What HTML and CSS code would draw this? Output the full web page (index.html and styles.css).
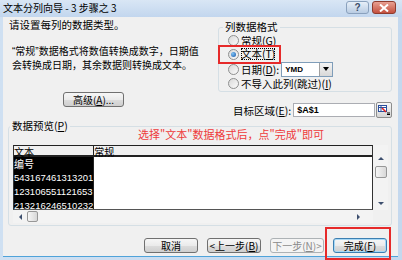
FILE: index.html
```html
<!DOCTYPE html>
<html lang="zh-CN">
<head>
    <meta charset="UTF-8">
    <title>文本分列向导 - 3 步骤之 3</title>
    <link rel="stylesheet" href="styles.css">
</head>
<body>
<div class="window">
    <div class="titlebar">
        <span class="title">文本分列向导 - 3 步骤之 3</span>
        <div class="caption-btns">
            <span class="cap help">?</span>
            <span class="cap close">
                <svg width="10" height="8" viewBox="0 0 10 8"><path d="M1 0.5 L9 7.5 M9 0.5 L1 7.5" stroke="#fff" stroke-width="2"/></svg>
            </span>
        </div>
    </div>
    <div class="frame">
        <div class="client">
            <div class="top">
                <div class="intro">
                    <p class="lead">请设置每列的数据类型。</p>
                    <p class="desc">“常规”数据格式将数值转换成数字，日期值<br>会转换成日期，其余数据则转换成文本。</p>
                    <button class="btn adv">高级(<u>A</u>)...</button>
                </div>
                <div class="side">
                    <fieldset class="group fmt">
                        <legend>列数据格式</legend>
                        <div class="opt r1"><span class="radio"></span>常规(<u>G</u>)</div>
                        <div class="opt r2"><span class="radio on"></span><span class="focus">文本(<u>T</u>)</span><span class="mark"></span></div>
                        <div class="opt r3"><span class="radio"></span>日期(<u>D</u>):
                            <span class="combo"><span class="combo-text">YMD</span><span class="drop"></span></span>
                        </div>
                        <div class="opt r4"><span class="radio"></span>不导入此列(跳过)(<u>I</u>)</div>
                    </fieldset>
                    <div class="dest">
                        <span>目标区域(<u>E</u>):</span>
                        <span class="field">$A$1</span>
                        <span class="refbtn">
                            <svg width="12" height="10" viewBox="0 0 12 10">
                                <rect x="0.5" y="0.5" width="8" height="6" fill="#fff" stroke="#2a4f9e"/>
                                <path d="M1 2.5 H8 M3 1 V6" stroke="#2a4f9e" stroke-width="1"/>
                                <path d="M4 3 L8 7" stroke="#e02020" stroke-width="1.6"/>
                                <path d="M9 8 H12 M9 9.5 H12" stroke="#000" stroke-width="1"/>
                            </svg>
                        </span>
                    </div>
                </div>
            </div>

            <fieldset class="group preview">
                <legend>数据预览(<u>P</u>)</legend>
                <div class="note">选择"文本"数据格式后，点"完成"即可</div>
                <div class="grid-wrap">
                    <div class="grid">
                        <div class="col sel">
                            <div class="head">文本</div>
                            <div class="cell">编号</div>
                            <div class="cell num">543167461313201</div>
                            <div class="cell num">123106551121653</div>
                            <div class="cell num">213216246510232</div>
                        </div>
                        <div class="col">
                            <div class="head">常规</div>
                        </div>
                    </div>
                    <div class="vscroll">
                        <span class="arrow up"></span>
                        <span class="thumb"></span>
                        <span class="arrow down"></span>
                    </div>
                </div>
                <div class="hscroll">
                    <span class="arrow left"></span>
                    <span class="thumb"></span>
                    <span class="arrow right"></span>
                </div>
            </fieldset>

            <div class="actions">
                <button class="btn">取消</button>
                <button class="btn">&lt;上一步(<u>B</u>)</button>
                <button class="btn" disabled>下一步(<u>N</u>)&gt;</button>
                <button class="btn default">完成(<u>F</u>)<span class="mark"></span></button>
            </div>
        </div>
    </div>
</div>
</body>
</html>
```

FILE: styles.css
```css
/* Window frame */
* {
  box-sizing: border-box;
}

body {
  margin: 0;
  width: 402px;
  height: 260px;
  overflow: hidden;
  font-family: "Noto Sans CJK SC", "Liberation Sans", sans-serif;
  font-size: 10.5px;
  color: #000;
  background: #c7dbf0;
}

.window {
  width: 402px;
  height: 260px;
  display: flex;
  flex-direction: column;
}

.titlebar {
  height: 17px;
  display: flex;
  align-items: flex-start;
  justify-content: space-between;
  padding: 0 6px 0 3px;
  background: linear-gradient(to bottom, #d9e6f5, #c2d6ee);
}

.title {
  line-height: 15px;
  font-size: 10px;
}

.caption-btns {
  display: flex;
  gap: 3px;
  padding-top: 1px;
}

.cap {
  height: 13px;
  border-radius: 3px;
  display: flex;
  align-items: center;
  justify-content: center;
}

.help {
  width: 23px;
  border: 1px solid #8aa1bd;
  background: linear-gradient(to bottom, #e7eff8, #b9cce3);
  color: #3b4e6a;
  font-family: "Liberation Sans", sans-serif;
  font-size: 10px;
  font-weight: 700;
  line-height: 11px;
}

.close {
  width: 24px;
  border: 1px solid #8e3b2e;
  background: linear-gradient(to bottom, #e8a092, #c4503f);
}

.frame {
  flex: 1;
  padding: 0 4px 0 3px;
  background: linear-gradient(to right, #cfe0f2, #c4d8ee);
}

.client {
  height: 240px;
  background: #f0f0f0;
  border-bottom: 1px solid #4fa3da;
  display: flex;
  flex-direction: column;
}

/* Top area */
.top {
  display: flex;
  height: 102px;
}

.intro {
  width: 215px;
  display: flex;
  flex-direction: column;
  align-items: flex-start;
}

.intro p {
  margin: 0;
  line-height: 14px;
  white-space: nowrap;
}

.lead {
  margin-top: 1px !important;
  padding-left: 6px;
}

.desc {
  margin-top: 13px !important;
  padding-left: 9px;
  font-family: "Liberation Sans", "Noto Sans CJK SC", sans-serif;
  font-size: 10px;
}

.btn {
  font-family: inherit;
  font-size: 10px;
  color: #000;
  height: 15px;
  padding: 0;
  line-height: 13px;
  white-space: nowrap;
  border: 1px solid #707070;
  border-radius: 3px;
  background: linear-gradient(to bottom, #f6f6f6 0%, #ebebeb 50%, #dddddd 51%, #cfcfcf 100%);
  position: relative;
}

.adv {
  width: 61px;
  margin: 19px 0 0 60px;
}

.side {
  width: 174px;
  display: flex;
  flex-direction: column;
}

.group {
  margin: 0;
  padding: 0 0 0 4px;
  border: 1px solid #d5dfe5;
  border-radius: 3px;
}

.group legend {
  padding: 0 2px;
  line-height: 12px;
}

.fmt {
  margin-top: 4px;
  height: 71px;
}

.opt {
  display: flex;
  align-items: center;
  position: relative;
  white-space: nowrap;
}

.r1 { height: 13px; margin-top: 1px; }
.r2 { height: 14px; }
.r3 { height: 16px; }
.r4 { height: 13px; }

.radio {
  width: 11px;
  height: 11px;
  margin: 0 2px 0 5px;
  border: 1px solid #8e8f8f;
  border-radius: 50%;
  background: linear-gradient(135deg, #d9d9d9, #fbfbfb);
  display: flex;
  align-items: center;
  justify-content: center;
}

.radio.on::after {
  content: "";
  width: 5px;
  height: 5px;
  border-radius: 50%;
  background: radial-gradient(circle at 35% 35%, #7fc3f5, #1656a8);
}

.focus {
  outline: 1px dotted #000;
  outline-offset: -1px;
  line-height: 12px;
}

.mark {
  position: absolute;
  border: 2px solid #e62a2a;
  pointer-events: none;
}

.r2 .mark {
  left: -5px;
  top: -2px;
  width: 63px;
  height: 19px;
}

.combo {
  width: 52px;
  height: 15px;
  margin-left: 2px;
  border: 1px solid #7f9db9;
  background: #fff;
  display: flex;
  justify-content: space-between;
}

.combo-text {
  font-family: "Liberation Sans", sans-serif;
  font-size: 8px;
  font-weight: 700;
  line-height: 13px;
  padding-left: 3px;
}

.drop {
  width: 13px;
  border-left: 1px solid #a0a0a0;
  background: linear-gradient(to bottom, #f4f4f4, #d8d8d8);
  display: flex;
  align-items: center;
  justify-content: center;
}

.drop::after {
  content: "";
  border-left: 3px solid transparent;
  border-right: 3px solid transparent;
  border-top: 4px solid #000;
}

.dest {
  display: flex;
  align-items: center;
  height: 16px;
  margin-top: 10px;
  padding-left: 15px;
  white-space: nowrap;
}

.field {
  width: 83px;
  height: 14px;
  margin-left: 2px;
  border: 1px solid #abadb3;
  background: #fff;
  font-family: "Liberation Sans", sans-serif;
  font-size: 9px;
  font-weight: 700;
  line-height: 12px;
  padding-left: 3px;
}

.refbtn {
  width: 16px;
  height: 16px;
  margin-left: 1px;
  border: 1px solid #8d8d8d;
  border-radius: 2px;
  background: linear-gradient(to bottom, #f6f6f6, #d6d6d6);
  display: flex;
  align-items: center;
  justify-content: center;
}

/* Preview */
.preview {
  margin: 1px 6px 0 5px;
  padding: 0;
  height: 106px;
}

.preview legend {
  margin-left: 1px;
}

.note {
  margin: -4px 0 0 129px;
  line-height: 13px;
  color: #ee3b3b;
  font-size: 11px;
}

.grid-wrap {
  display: flex;
  margin: 4px 0 0 4px;
  height: 65px;
}

.grid {
  width: 360px;
  display: flex;
  border: 1px solid #333;
  border-top-color: #222;
  border-bottom-color: #555;
  background: #fff;
  overflow: hidden;
}

.col {
  flex: 1;
}

.col.sel {
  flex: 0 0 70px;
  border-right: 1px solid #222;
  background: #000;
  color: #fff;
}

.head {
  height: 11px;
  line-height: 11px;
  font-size: 10px;
  background: #f0f0f0;
  color: #000;
  border-bottom: 2px solid #222;
  white-space: nowrap;
}

.cell {
  height: 14px;
  line-height: 14px;
  font-size: 10px;
  white-space: nowrap;
  overflow: hidden;
}

.cell.num {
  font-family: "Liberation Sans", sans-serif;
  font-size: 9.5px;
}

.vscroll {
  width: 15px;
  display: flex;
  flex-direction: column;
  align-items: center;
  padding-top: 6px;
  background: #f3f3f3;
}

.hscroll {
  width: 360px;
  height: 13px;
  margin-left: 4px;
  display: flex;
  align-items: center;
  background: #f3f3f3;
}

.arrow {
  width: 14px;
  height: 14px;
  display: flex;
  align-items: center;
  justify-content: center;
}

.arrow::after {
  content: "";
  border: 3px solid transparent;
}

.arrow.up::after { border-bottom: 3px solid #3d4f6e; border-top-width: 0; }
.arrow.down::after { border-top: 3px solid #3d4f6e; border-bottom-width: 0; }
.arrow.left::after { border-right: 3px solid #3d4f6e; border-left-width: 0; }
.arrow.right::after { border-left: 3px solid #3d4f6e; border-right-width: 0; }

.vscroll .thumb {
  width: 12px;
  height: 12px;
  margin-top: 1px;
  margin-bottom: auto;
}

.hscroll .thumb {
  width: 11px;
  height: 11px;
  margin-right: auto;
}

.thumb {
  border: 1px solid #979797;
  border-radius: 2px;
  background: linear-gradient(to right, #f6f6f6, #d8d8d8);
}

.hscroll .arrow.right {
  margin-right: 8px;
}

/* Bottom buttons */
.actions {
  display: flex;
  justify-content: flex-end;
  gap: 9px;
  margin-top: 12px;
  padding-right: 11px;
}

.actions .btn {
  width: 54px;
}

.btn:disabled {
  color: #8a8a8a;
  border-color: #adb2b5;
  background: #f4f4f4;
}

.btn.default {
  border-color: #3c7fb1;
  box-shadow: inset 0 0 0 1px #a7d8f5;
}

.default .mark {
  left: -9px;
  top: -12px;
  width: 66px;
  height: 33px;
}
```
